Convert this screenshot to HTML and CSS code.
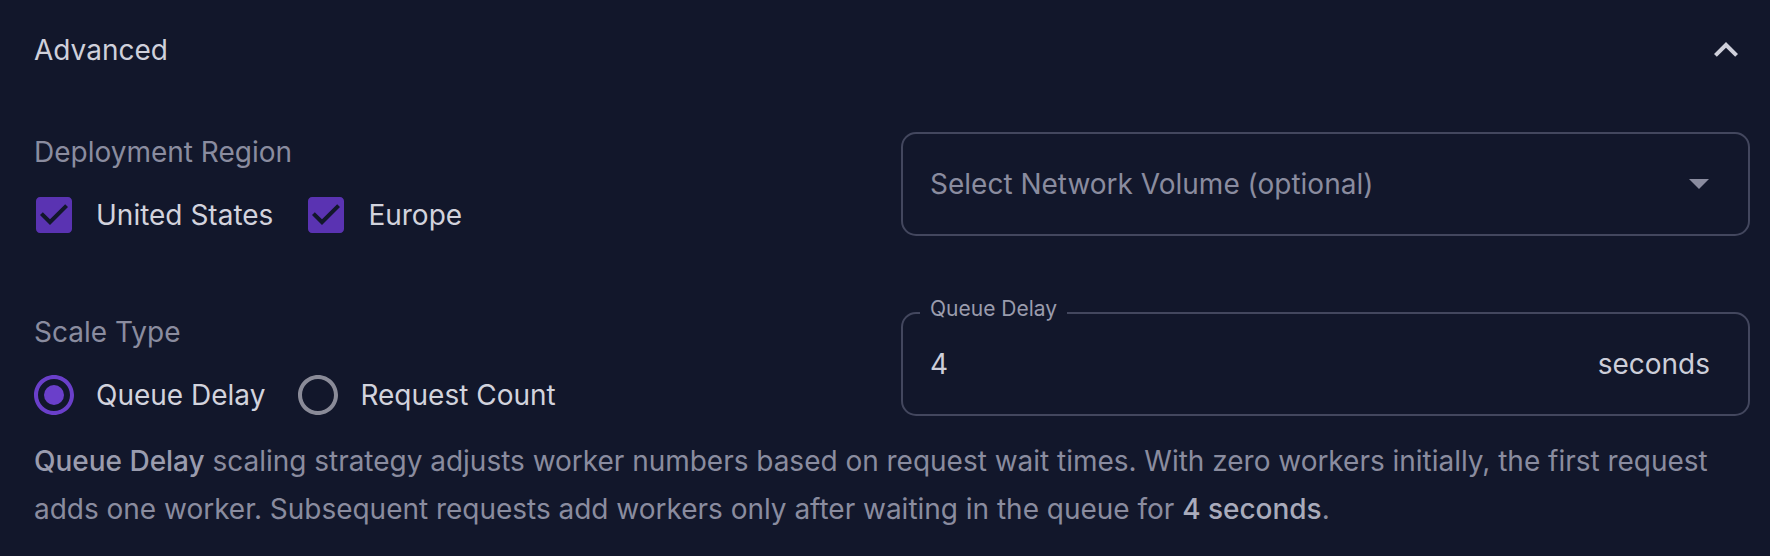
FILE: index.html
```html
<!DOCTYPE html>
<html lang="en">
<head>
<meta charset="utf-8">
<title>Advanced</title>
<link rel="stylesheet" href="styles.css">
</head>
<body>
<section class="panel">
  <header class="panel-header">
    <span class="panel-title">Advanced</span>
    <svg class="chevron" viewBox="0 0 24 24" width="48" height="48"><path d="M12 8l-6 6 1.41 1.41L12 10.83l4.59 4.58L18 14z"/></svg>
  </header>

  <div class="grid">
    <div class="field-group">
      <div class="group-label">Deployment Region</div>
      <div class="options">
        <label class="option">
          <span class="control">
            <svg class="checkbox" viewBox="0 0 24 24" width="48" height="48"><path d="M19 3H5c-1.11 0-2 .9-2 2v14c0 1.1.89 2 2 2h14c1.11 0 2-.9 2-2V5c0-1.1-.89-2-2-2zm-9 14l-5-5 1.41-1.41L10 14.17l7.59-7.59L19 8l-9 9z"/></svg>
          </span>
          <span class="option-text">United States</span>
        </label>
        <label class="option">
          <span class="control">
            <svg class="checkbox" viewBox="0 0 24 24" width="48" height="48"><path d="M19 3H5c-1.11 0-2 .9-2 2v14c0 1.1.89 2 2 2h14c1.11 0 2-.9 2-2V5c0-1.1-.89-2-2-2zm-9 14l-5-5 1.41-1.41L10 14.17l7.59-7.59L19 8l-9 9z"/></svg>
          </span>
          <span class="option-text">Europe</span>
        </label>
      </div>
    </div>

    <div class="select-wrap">
      <div class="select">
        <span class="select-placeholder">Select Network Volume (optional)</span>
        <svg class="dropdown" viewBox="7 10 10 5" width="20" height="10"><path d="M7 10l5 5 5-5z"/></svg>
      </div>
    </div>

    <div class="field-group">
      <div class="group-label">Scale Type</div>
      <div class="options">
        <label class="option">
          <span class="control">
            <svg class="radio checked" viewBox="0 0 24 24" width="48" height="48"><path d="M12 2C6.48 2 2 6.48 2 12s4.48 10 10 10 10-4.48 10-10S17.52 2 12 2zm0 18c-4.42 0-8-3.58-8-8s3.58-8 8-8 8 3.58 8 8-3.58 8-8 8z"/><circle cx="12" cy="12" r="5"/></svg>
          </span>
          <span class="option-text">Queue Delay</span>
        </label>
        <label class="option">
          <span class="control">
            <svg class="radio" viewBox="0 0 24 24" width="48" height="48"><path d="M12 2C6.48 2 2 6.48 2 12s4.48 10 10 10 10-4.48 10-10S17.52 2 12 2zm0 18c-4.42 0-8-3.58-8-8s3.58-8 8-8 8 3.58 8 8-3.58 8-8 8z"/></svg>
          </span>
          <span class="option-text">Request Count</span>
        </label>
      </div>
    </div>

    <div class="select-wrap">
      <div class="input">
        <span class="input-legend">Queue Delay</span>
        <span class="input-value">4</span>
        <span class="input-unit">seconds</span>
      </div>
    </div>
  </div>

  <p class="description"><strong class="strong-dim">Queue Delay</strong> scaling strategy adjusts worker numbers based on request wait times. With zero workers initially, the first request adds one worker. Subsequent requests add workers only after waiting in the queue for <strong class="strong-light">4 seconds</strong>.</p>
</section>
</body>
</html>
```

FILE: styles.css
```css
html, body {
  margin: 0;
  padding: 0;
  background: #12172b;
}

body {
  font-family: Inter, "Noto Sans", sans-serif;
  color: #d4d5df;
  width: 1770px;
  height: 556px;
  overflow: hidden;
}

.panel {
  padding: 0 20px 0 34px;
}

.panel-header {
  height: 100px;
  display: flex;
  align-items: center;
  justify-content: space-between;
}

.panel-title {
  font-size: 28px;
  line-height: 42px;
  color: #cfd0db;
}

.chevron {
  fill: #cfd0db;
  display: block;
}

.grid {
  padding-top: 31px;
  display: grid;
  grid-template-columns: 1fr 849px;
  column-gap: 18px;
  row-gap: 54px;
}

.group-label {
  font-size: 28px;
  line-height: 42px;
  color: #8a8c9f;
}

.options {
  display: flex;
  align-items: center;
  margin-left: -22px;
}

.option {
  display: flex;
  align-items: center;
  margin-right: 33px;
  margin-left: -22px;
}

.option:first-child {
  margin-left: 0;
}

.control {
  width: 84px;
  height: 84px;
  display: flex;
  align-items: center;
  justify-content: center;
}

.control svg {
  display: block;
}

.checkbox {
  fill: #5a33b2;
}

.radio {
  fill: #8a8b98;
}

.radio.checked {
  fill: #6a3fca;
}

.option-text {
  font-size: 28px;
  line-height: 42px;
  color: #d2d3dd;
}

.select-wrap {
  padding-top: 1px;
}

.select {
  box-sizing: border-box;
  height: 104px;
  border: 2px solid #43475e;
  border-radius: 15px;
  display: flex;
  align-items: center;
  justify-content: space-between;
  padding: 0 39px 0 27px;
}

.select-placeholder {
  font-size: 28px;
  line-height: 40px;
  color: #8a8c9f;
}

.dropdown {
  fill: #8a8c9f;
  display: block;
}

.input {
  position: relative;
  box-sizing: border-box;
  height: 104px;
  border: 2px solid #43475e;
  border-radius: 15px;
  display: flex;
  align-items: center;
  justify-content: space-between;
  padding: 0 38px 0 27px;
}

.input-legend {
  position: absolute;
  left: 17px;
  top: -16px;
  padding: 0 10px;
  background: #12172b;
  font-size: 21px;
  line-height: 21px;
  color: #9a9cad;
}

.input-value,
.input-unit {
  font-size: 28px;
  line-height: 40px;
  color: #cdced9;
}

.description {
  margin: 0;
  font-size: 28px;
  line-height: 48px;
  letter-spacing: -0.02px;
  color: #8a8c9f;
}

.strong-dim {
  font-weight: 500;
  color: #9a9cae;
}

.strong-light {
  font-weight: 500;
  color: #a9abbb;
}
```
